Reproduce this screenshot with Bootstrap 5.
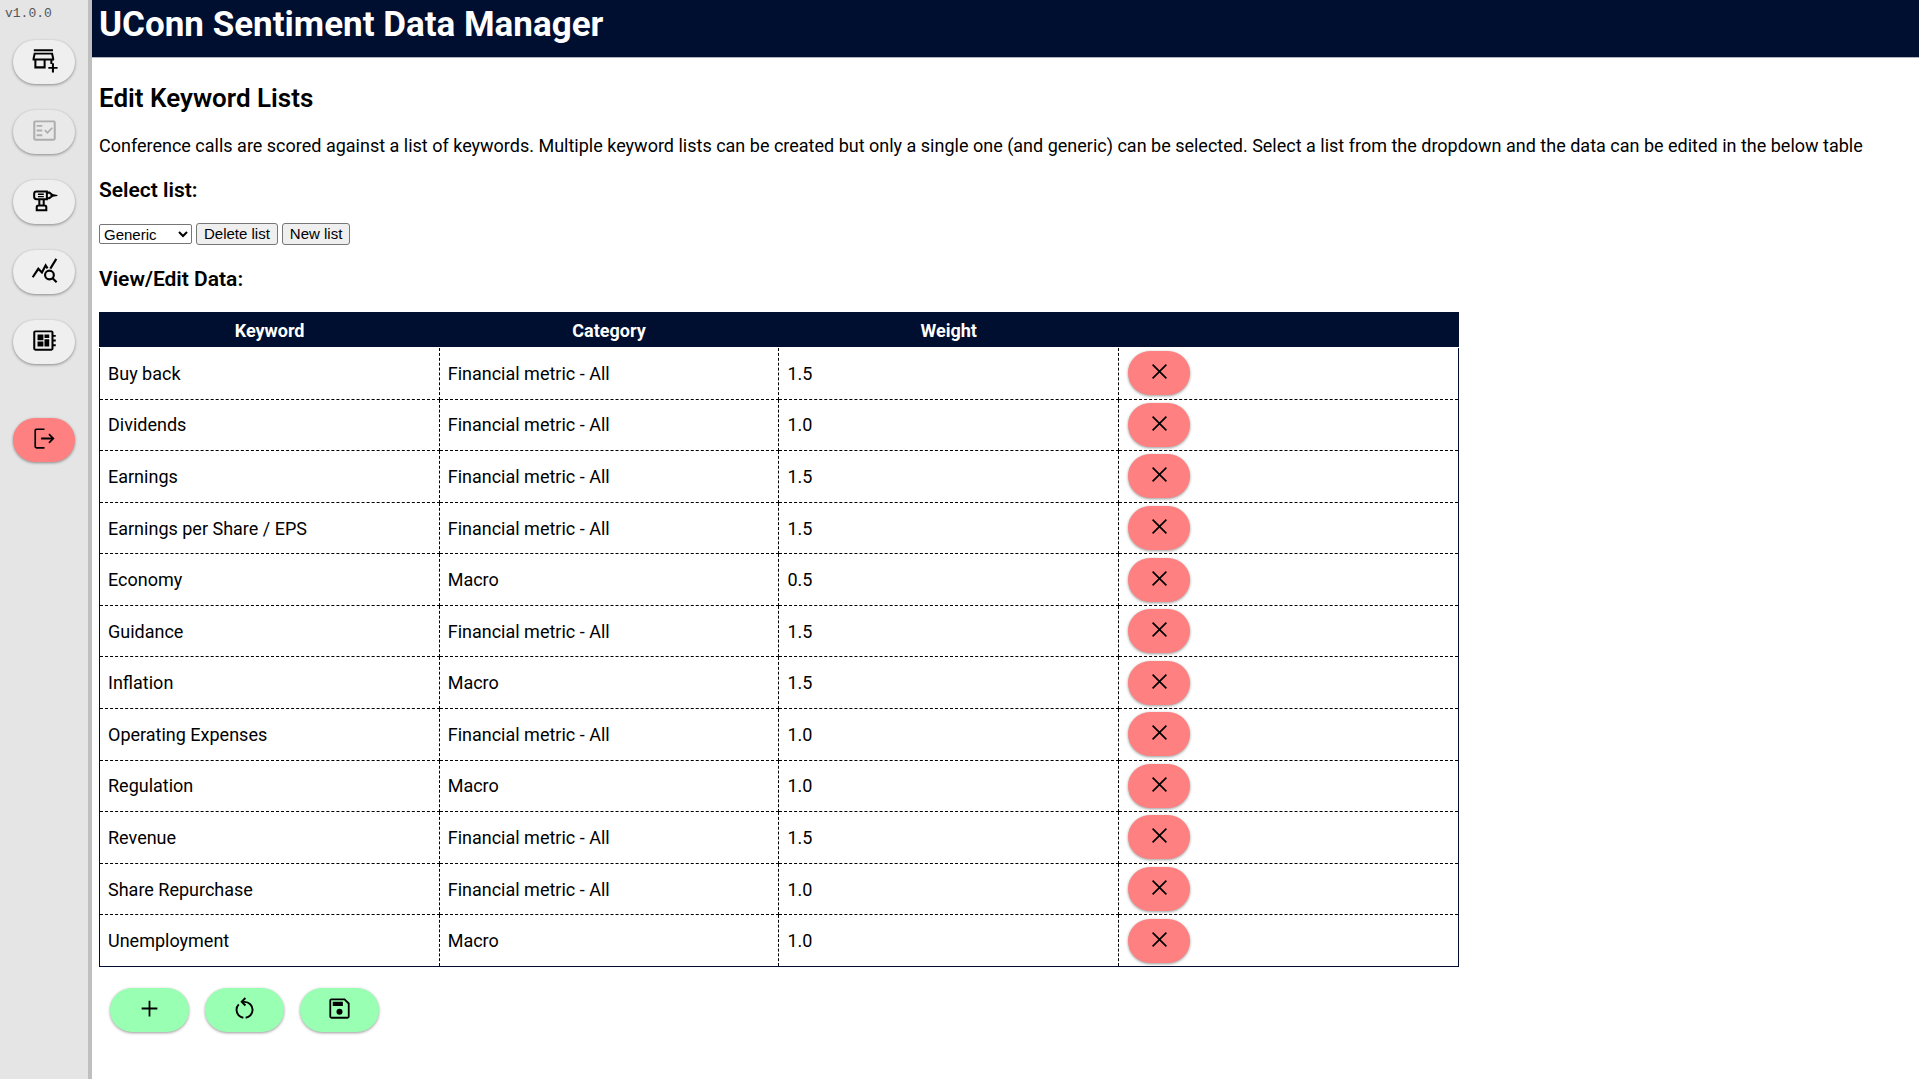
<!DOCTYPE html>
<html lang="en">
<head>
<meta charset="utf-8">
<meta name="viewport" content="width=device-width, initial-scale=1">
<title>UConn Sentiment Data Manager</title>
<link rel="stylesheet" href="https://cdn.jsdelivr.net/npm/bootstrap@5.3.0/dist/css/bootstrap.min.css">
<style>
  body { font-family: Roboto, "Liberation Sans", sans-serif; font-size: 18px; line-height: 21px; color: #000; background: #fff; }
  .side-rail { width: 92px; background: #e5e5e5; border-right: 4px solid #bfbfbf; }
  .app-version { font-family: "Liberation Mono", monospace; font-size: 13px; line-height: 16px; color: #555; padding: 6px 5px; margin-bottom: 12px; }
  .rail-nav { gap: 26px; padding-left: 13px; }
  .rail-nav .exit-btn { margin-top: 28px; }
  .pill { width: 62px; height: 44px; padding: 0 0 3px; border: 0; border-radius: 22px; background: #efefef; color: #000; box-shadow: 0 1px 3px rgba(0, 0, 0, .4); }
  .pill svg { width: 27px; height: 27px; fill: currentColor; }
  .pill:disabled { background: #e9e9e9; color: #adadad; }
  .pill-red { background: #ff8080; }
  .pill-green { background: #99ffb3; width: 79px; }
  .app-bar { background: #000e2f; color: #fff; height: 58px; padding: 4px 7px; border-bottom: 1px solid #b3b3bd; }
  .app-bar h1 { font-size: 35px; line-height: 42px; font-weight: 700; }
  .page-body { padding: 25px 7px; }
  .page-body h2 { font-size: 26px; line-height: 30px; font-weight: 600; margin-bottom: 22px; }
  .page-body h3 { font-size: 21px; line-height: 24px; font-weight: 600; margin-bottom: 21px; }
  .intro { margin-bottom: 22px; }
  .list-tools { gap: 4px; margin-bottom: 22px; }
  .list-tools button, .list-tools select { font-family: "Liberation Sans", sans-serif; font-size: 15px; line-height: 18px; color: #000; border: 1px solid #767676; border-radius: 3px; }
  .list-tools button { background: #efefef; height: 22px; padding: 1px 7px; }
  .list-tools select { background: #fff; width: 93px; height: 20px; padding: 0; border-radius: 2px; }
  .keywords { width: 75%; height: 655px; table-layout: fixed; border-collapse: collapse; border: 1px solid #000e2f; margin-bottom: 21px; }
  .keywords thead { background: #000e2f; color: #fff; }
  .keywords th { height: 35px; padding: 0; text-align: center; font-weight: 700; border-bottom: 1px solid #fff; }
  .keywords td { padding: 0 8px; border: 1px dashed #000; border-top-width: 0; }
  .keywords td:first-child { border-left: 1px solid #000e2f; }
  .keywords td:last-child { border-right: 1px solid #000e2f; padding-left: 9px; }
  .keywords tr:last-child td { border-bottom: 1px solid #000e2f; }
  .table-tools { gap: 16px; padding-left: 11px; }
</style>
<script src="https://cdn.jsdelivr.net/npm/bootstrap@5.3.0/dist/js/bootstrap.bundle.min.js"></script>
</head>
<body>
<svg class="d-none" aria-hidden="true">
  <symbol id="i-close" viewBox="0 0 24 24"><path d="M6.4 18.65 5.35 17.6l5.6-5.6-5.6-5.6L6.4 5.35l5.6 5.6 5.6-5.6 1.05 1.05-5.6 5.6 5.6 5.6-1.05 1.05-5.6-5.6z"/></symbol>
</svg>
<div class="d-flex min-vh-100">
  <aside class="side-rail flex-shrink-0">
    <div class="app-version">v1.0.0</div>
    <nav class="rail-nav d-flex flex-column align-items-start" aria-label="Main">
      <button type="button" class="pill d-flex align-items-center justify-content-center" aria-label="Add company">
        <svg viewBox="0 0 24 24"><path d="M2.500 2h17v1.800h-17zM2.500 5h17l1.100 5.200v1.800H19v3h-1.800v-3H13v7H3v-7H1.400v-1.800zm1.500 1.700-.8 3.600h15.600l-.8-3.600zM4.800 12v5.200h6.400V12zM18.600 14.500h1.800v3.200h3.200v1.700h-3.200v3.200h-1.800v-3.200h-3.200v-1.700h3.200z"/></svg>
      </button>
      <button type="button" class="pill d-flex align-items-center justify-content-center" aria-label="Review calls" disabled>
        <svg viewBox="0 0 24 24"><path fill-rule="evenodd" d="M3.8 3h16.400c1 0 1.800.8 1.800 1.800v14.400c0 1-.8 1.800-1.800 1.800H3.800c-1 0-1.800-.8-1.800-1.800V4.800C2 3.800 2.800 3 3.800 3zm0 1.700v14.600h16.400V4.700zM5 7h5v1.600H5zm0 4.200h5v1.600H5zm0 4.200h5V17H5zM14.600 15l-2.900-2.900 1.100-1.100 1.800 1.800 3.800-3.800 1.100 1.100z"/></svg>
      </button>
      <button type="button" class="pill d-flex align-items-center justify-content-center" aria-label="Edit keywords">
        <svg viewBox="0 0 24 24"><g fill="none" stroke="currentColor" stroke-width="1.800"><path d="M5 3.900h9.100v7H5c-1.300 0-2.200-1-2.200-2.200V6.100c0-1.300.9-2.200 2.200-2.200zM14.100 5h2.200l1.900 1.500v1.900l-1.900 1.500h-2.200M7.400 11v5.300M11.300 11v5.300M5.100 20.600v-2.700c0-.8.6-1.400 1.400-1.400h5.700c.8 0 1.400.6 1.400 1.400v2.700z"/><path d="M6.200 6.400h5.200M6.200 8.600h5.200" stroke-width="1.200"/></g><path d="M18 6.100 23.500 7v1L18 8.900z"/></svg>
      </button>
      <button type="button" class="pill d-flex align-items-center justify-content-center" aria-label="Analyse results">
        <svg viewBox="0 0 24 24"><g fill="none" stroke="currentColor" stroke-width="1.900"><path d="m1.500 18 5-7.500 3.200 3.300L13 7.500l1.700 2.600M17.200 10.300l5.300-8.600"/><circle cx="16.400" cy="16" r="3.900"/><path d="m19.200 18.800 3.600 3.600"/></g></svg>
      </button>
      <button type="button" class="pill d-flex align-items-center justify-content-center" aria-label="Model settings">
        <svg viewBox="0 0 24 24"><path fill-rule="evenodd" d="M3.800 3h14.400c1 0 1.800.8 1.800 1.800V7h2v1.600h-2v2.600h2v1.600h-2v2.600h2V17h-2v2.200c0 1-.8 1.800-1.800 1.800H3.800c-1 0-1.800-.8-1.800-1.800V4.800C2 3.800 2.800 3 3.800 3zm0 1.700v14.600h14.400V4.700zM5.800 6.700h5.200v5H5.800zm6.200 0h4.200v3.100H12zm0 4.100h4.200v6.500H12zm-6.200 2h5.200v4.500H5.800z"/></svg>
      </button>
      <button type="button" class="pill pill-red exit-btn d-flex align-items-center justify-content-center" aria-label="Log out">
        <svg viewBox="0 0 24 24"><path d="M4.800 3H12v1.500H4.800a.3.300 0 0 0-.3.300v14.400c0 .2.100.3.300.3H12V21H4.800C3.800 21 3 20.200 3 19.200V4.800C3 3.800 3.800 3 4.800 3zm11.700 4.600L20.900 12l-4.400 4.400-1.100-1.100 2.500-2.500H9v-1.600h8.900l-2.500-2.500z"/></svg>
      </button>
    </nav>
  </aside>
  <div class="flex-grow-1">
    <header class="app-bar"><h1 class="m-0">UConn Sentiment Data Manager</h1></header>
    <main class="page-body">
      <h2>Edit Keyword Lists</h2>
      <p class="intro">Conference calls are scored against a list of keywords. Multiple keyword lists can be created but only a single one (and generic) can be selected. Select a list from the dropdown and the data can be edited in the below table</p>
      <h3><label for="list">Select list:</label></h3>
      <div class="list-tools d-flex align-items-center">
        <select id="list"><option>Generic</option></select>
        <button type="button">Delete list</button>
        <button type="button">New list</button>
      </div>
      <h3>View/Edit Data:</h3>
      <table class="keywords">
        <thead><tr><th scope="col">Keyword</th><th scope="col">Category</th><th scope="col">Weight</th><th scope="col" aria-label="Remove"></th></tr></thead>
        <tbody>
          <tr><td>Buy back</td><td>Financial metric - All</td><td>1.5</td><td><button type="button" class="pill pill-red d-flex align-items-center justify-content-center" aria-label="Remove Buy back"><svg><use href="#i-close"/></svg></button></td></tr>
          <tr><td>Dividends</td><td>Financial metric - All</td><td>1.0</td><td><button type="button" class="pill pill-red d-flex align-items-center justify-content-center" aria-label="Remove Dividends"><svg><use href="#i-close"/></svg></button></td></tr>
          <tr><td>Earnings</td><td>Financial metric - All</td><td>1.5</td><td><button type="button" class="pill pill-red d-flex align-items-center justify-content-center" aria-label="Remove Earnings"><svg><use href="#i-close"/></svg></button></td></tr>
          <tr><td>Earnings per Share / EPS</td><td>Financial metric - All</td><td>1.5</td><td><button type="button" class="pill pill-red d-flex align-items-center justify-content-center" aria-label="Remove Earnings per Share / EPS"><svg><use href="#i-close"/></svg></button></td></tr>
          <tr><td>Economy</td><td>Macro</td><td>0.5</td><td><button type="button" class="pill pill-red d-flex align-items-center justify-content-center" aria-label="Remove Economy"><svg><use href="#i-close"/></svg></button></td></tr>
          <tr><td>Guidance</td><td>Financial metric - All</td><td>1.5</td><td><button type="button" class="pill pill-red d-flex align-items-center justify-content-center" aria-label="Remove Guidance"><svg><use href="#i-close"/></svg></button></td></tr>
          <tr><td>Inflation</td><td>Macro</td><td>1.5</td><td><button type="button" class="pill pill-red d-flex align-items-center justify-content-center" aria-label="Remove Inflation"><svg><use href="#i-close"/></svg></button></td></tr>
          <tr><td>Operating Expenses</td><td>Financial metric - All</td><td>1.0</td><td><button type="button" class="pill pill-red d-flex align-items-center justify-content-center" aria-label="Remove Operating Expenses"><svg><use href="#i-close"/></svg></button></td></tr>
          <tr><td>Regulation</td><td>Macro</td><td>1.0</td><td><button type="button" class="pill pill-red d-flex align-items-center justify-content-center" aria-label="Remove Regulation"><svg><use href="#i-close"/></svg></button></td></tr>
          <tr><td>Revenue</td><td>Financial metric - All</td><td>1.5</td><td><button type="button" class="pill pill-red d-flex align-items-center justify-content-center" aria-label="Remove Revenue"><svg><use href="#i-close"/></svg></button></td></tr>
          <tr><td>Share Repurchase</td><td>Financial metric - All</td><td>1.0</td><td><button type="button" class="pill pill-red d-flex align-items-center justify-content-center" aria-label="Remove Share Repurchase"><svg><use href="#i-close"/></svg></button></td></tr>
          <tr><td>Unemployment</td><td>Macro</td><td>1.0</td><td><button type="button" class="pill pill-red d-flex align-items-center justify-content-center" aria-label="Remove Unemployment"><svg><use href="#i-close"/></svg></button></td></tr>
        </tbody>
      </table>
      <div class="table-tools d-flex">
        <button type="button" class="pill pill-green d-flex align-items-center justify-content-center" aria-label="Add keyword">
          <svg viewBox="0 0 24 24"><path d="M11.200 19v-6.200H5v-1.600h6.200V5h1.600v6.200H19v1.600h-6.200V19z"/></svg>
        </button>
        <button type="button" class="pill pill-green d-flex align-items-center justify-content-center" aria-label="Reset table">
          <svg viewBox="0 0 24 24"><g fill="none" stroke="currentColor" stroke-width="1.700"><path d="M11 20.200C7.500 19.700 4.900 16.800 4.900 13.200c0-1.900.7-3.600 2-4.900M13 20.200c3.500-.5 6.200-3.400 6.200-7 0-3.900-3.200-7.100-7.100-7.100h-1.300"/><path d="M12.800 2.700 9.500 6l3.300 3.300"/></g></svg>
        </button>
        <button type="button" class="pill pill-green d-flex align-items-center justify-content-center" aria-label="Save table">
          <svg viewBox="0 0 24 24"><path fill-rule="evenodd" d="M4.800 3h12L21 7.200v12c0 1-.8 1.800-1.800 1.800H4.800C3.800 21 3 20.200 3 19.200V4.800C3 3.800 3.800 3 4.800 3zm0 1.600a.2.200 0 0 0-.2.200v14.400c0 .1.100.2.200.2h14.400c.1 0 .2-.1.200-.2V7.900l-3.300-3.300zM12 12.200a2.700 2.700 0 1 1 0 5.400 2.700 2.700 0 0 1 0-5.400zM6 6h9v3.700H6z"/></svg>
        </button>
      </div>
    </main>
  </div>
</div>
</body>
</html>
